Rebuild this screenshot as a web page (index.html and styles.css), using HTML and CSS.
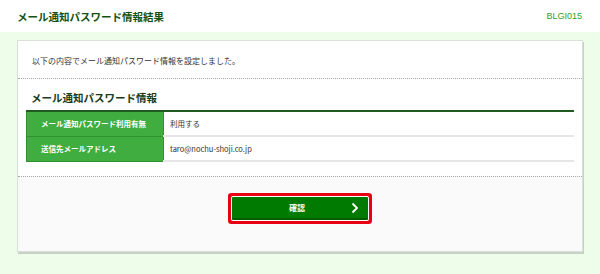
FILE: index.html
```html
<!DOCTYPE html>
<html lang="ja">
<head>
    <meta charset="UTF-8">
    <meta name="viewport" content="width=device-width, initial-scale=1.0">
    <title>メール通知パスワード情報結果</title>
    <link rel="stylesheet" href="styles.css">
</head>
<body>
    <div class="header">
        <h1 class="page-title">メール通知パスワード情報結果</h1>
        <span class="screen-id">BLGI015</span>
    </div>

    <div class="main">
        <div class="card">
            <p class="message">以下の内容でメール通知パスワード情報を設定しました。</p>

            <div class="section">
                <h2 class="section-title">メール通知パスワード情報</h2>
                <table class="info-table">
                    <tr>
                        <th>メール通知パスワード利用有無</th>
                        <td>利用する</td>
                    </tr>
                    <tr>
                        <th>送信先メールアドレス</th>
                        <td>taro@nochu-shoji.co.jp</td>
                    </tr>
                </table>
            </div>

            <div class="actions">
                <button class="btn-confirm">
                    <span>確認</span>
                    <svg class="chevron" width="8" height="12" viewBox="0 0 8 12">
                        <path d="M1.5 1.5 L6 6 L1.5 10.5" fill="none" stroke="#fff" stroke-width="1.8"/>
                    </svg>
                </button>
            </div>
        </div>
    </div>
</body>
</html>
```

FILE: styles.css
```css
body {
    margin: 0;
    font-family: "Noto Sans CJK JP", "Noto Sans", sans-serif;
    color: #333;
    background-color: #edfdea;
}

.header {
    height: 32px;
    padding: 0 17px;
    background-color: #fff;
    display: flex;
    align-items: center;
    justify-content: space-between;
}

.page-title {
    margin: 0;
    font-size: 10.5px;
    font-weight: bold;
    color: #145214;
}

.screen-id {
    font-family: "Liberation Sans", sans-serif;
    font-size: 9px;
    color: #2ca02c;
    margin-right: 1px;
}

.main {
    padding: 8px 17px 23px;
}

.card {
    background-color: #fff;
    border: 1px solid #d8e0d8;
    box-shadow: 1px 2px 0 #c6d2c6;
}

.message {
    margin: 0;
    padding: 12px 14px 10px;
    font-size: 8px;
    line-height: 15px;
    border-bottom: 1px dotted #a8a8a8;
}

.section {
    padding: 0 8px 14px;
}

.section-title {
    margin: 0;
    padding: 11px 0 4px 5px;
    font-size: 10.5px;
    line-height: 16px;
    font-weight: bold;
    color: #1a3a1a;
}

.info-table {
    width: 100%;
    border-collapse: collapse;
    border-top: 2px solid #1f5a1f;
    font-size: 7.5px;
}

.info-table th {
    width: 137px;
    height: 23px;
    padding: 0 0 0 14px;
    box-sizing: border-box;
    text-align: left;
    font-weight: bold;
    color: #fff;
    background-color: #40ad40;
    border: 1px solid #2f922f;
}

.info-table td {
    height: 23px;
    padding: 0 6px;
    border-bottom: 2px solid #e6e6e6;
    color: #333;
}

.actions {
    background-color: #fafafa;
    border-top: 1px dotted #a8a8a8;
    padding: 20px 0 31px;
    display: flex;
    justify-content: center;
}

.btn-confirm {
    width: 136px;
    height: 23px;
    padding: 0 9px 0 0;
    border: none;
    border-bottom: 2px solid #005c00;
    border-radius: 1px;
    background-color: #007a00;
    color: #fff;
    font-family: "Noto Sans CJK JP", sans-serif;
    font-size: 8px;
    font-weight: bold;
    box-shadow: 0 0 0 1px #fff, 0 0 0 4px #e60012;
    display: flex;
    align-items: center;
    justify-content: flex-end;
    position: relative;
    cursor: pointer;
}

.btn-confirm span {
    position: absolute;
    left: 0;
    right: 0;
    padding-right: 6px;
    text-align: center;
}

.chevron {
    display: block;
}
```
